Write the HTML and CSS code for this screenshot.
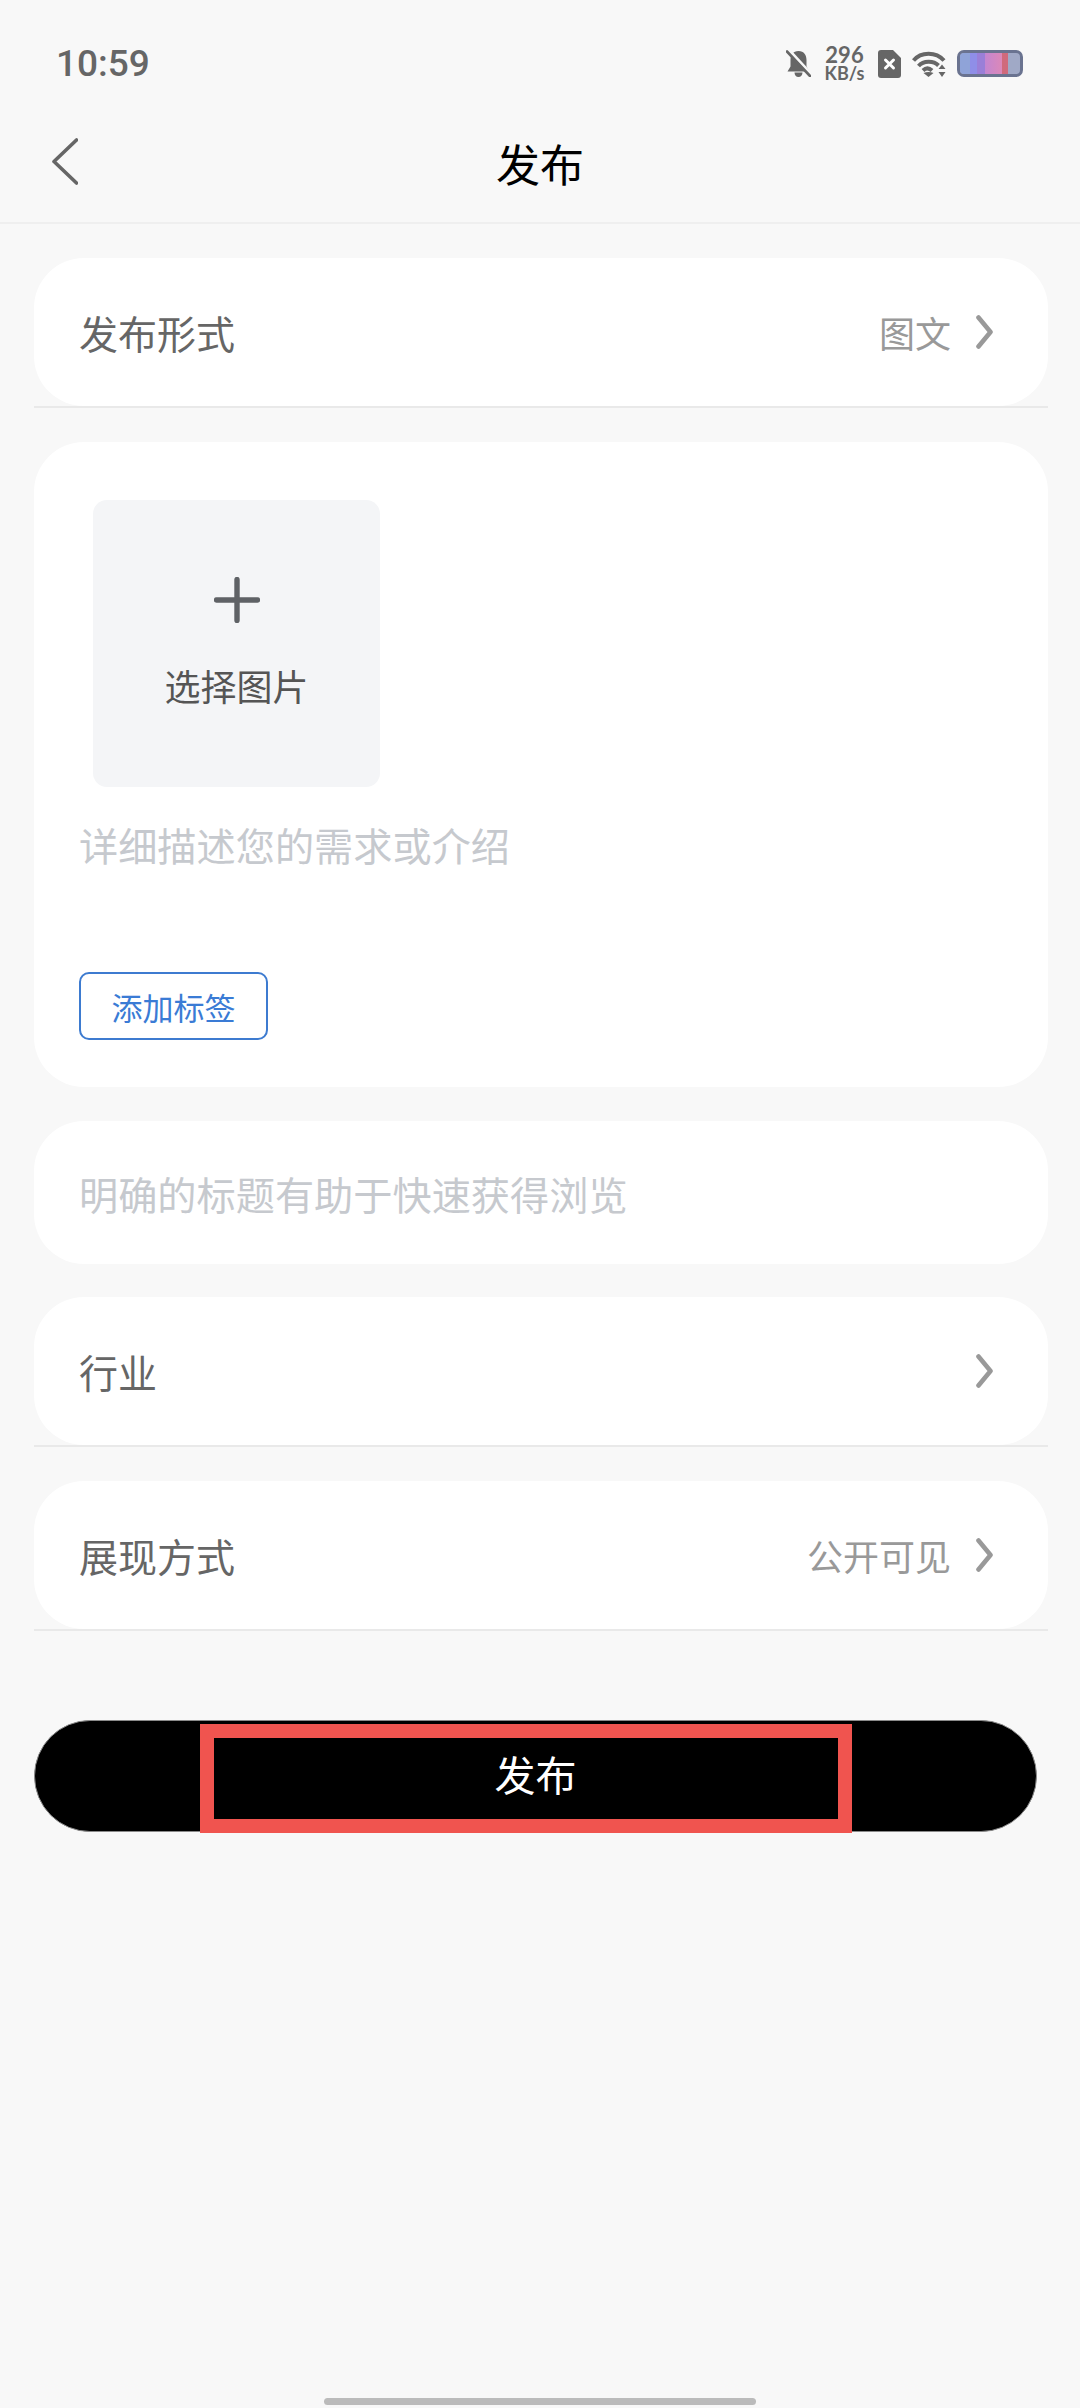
FILE: index.html
```html
<!doctype html>
<html lang="zh">
<head>
	<meta charset="utf-8">
	<title>发布</title>
	<link rel="stylesheet" href="styles.css">
</head>

<body>
<div class="status">
	<span class="time">10:59</span>
	<div class="status-icons">
		<svg class="ic-bell" width="25" height="27" viewBox="0 0 25 27">
			<path d="M12.500 1c5.500 0 8 4 8 9v6.500l3 5H1.500l3-5V10c0-5 2.500-9 8-9zM8.500 22.500h8c0 2.500-1.600 4.500-4 4.500s-4-2-4-4.500z" fill="#666"/>
			<path d="M3 0l22 24" stroke="#f8f8f8" stroke-width="3"/>
			<path d="M1 1.500l23 24.500" stroke="#666" stroke-width="2.600" stroke-linecap="round"/>
		</svg>
		<div class="speed"><span class="speed-num">296</span><span class="speed-unit">KB/s</span></div>
		<svg class="ic-sim" width="23" height="28" viewBox="0 0 23 28">
			<path d="M3 0h12l8 8v17a3 3 0 0 1-3 3H3a3 3 0 0 1-3-3V3a3 3 0 0 1 3-3z" fill="#666"/>
			<path d="M7.500 10l8 8M15.500 10l-8 8" stroke="#fff" stroke-width="3" stroke-linecap="round"/>
		</svg>
		<svg class="ic-wifi" width="34" height="26" viewBox="0 0 34 26">
			<g fill="none" stroke="#666" stroke-width="4">
				<path d="M1.500 9.500C9 .5 24 .5 32 9.500"/>
				<path d="M6.500 15c5-5.500 15-5.500 20-.5"/>
				<path d="M11 19.500c2.800-2.800 6-2.800 9 0"/>
			</g>
			<path d="M11.500 22c3-1.500 7-1.500 10 0L16.500 26z" fill="#666"/>
			<path d="M30 13.500l3.500 4.500h-7zM30 26l-3.500-5h7z" fill="#666"/>
		</svg>
		<div class="battery"><div class="battery-fill"></div></div>
	</div>
</div>

<div class="nav">
	<svg class="back" width="26" height="47" viewBox="0 0 26 47">
		<path d="M24.500 2L2 23.500 24.500 45" fill="none" stroke="#666" stroke-width="3.600" stroke-linecap="round" stroke-linejoin="round"/>
	</svg>
	<span class="nav-title">发布</span>
</div>

<div class="main">
	<div class="row-wrap">
		<div class="row">
			<span class="row-label">发布形式</span>
			<span class="row-value">图文</span>
			<svg class="chev" width="17" height="34" viewBox="0 0 17 34">
				<path d="M2.500 2.500L14.500 17 2.500 31.500" fill="none" stroke="#999" stroke-width="4.600" stroke-linecap="round" stroke-linejoin="round"/>
			</svg>
		</div>
	</div>

	<div class="card-editor">
		<div class="picker">
			<svg width="46" height="46" viewBox="0 0 46 46">
				<path d="M23 2.500v41M2.500 23h41" fill="none" stroke="#5f6266" stroke-width="5.400" stroke-linecap="round"/>
			</svg>
			<span class="picker-text">选择图片</span>
		</div>
		<div class="placeholder desc">详细描述您的需求或介绍</div>
		<div class="tag-btn">添加标签</div>
	</div>

	<div class="card-title">
		<span class="placeholder">明确的标题有助于快速获得浏览</span>
	</div>

	<div class="row-wrap">
		<div class="row">
			<span class="row-label">行业</span>
			<svg class="chev" width="17" height="34" viewBox="0 0 17 34">
				<path d="M2.500 2.500L14.500 17 2.500 31.500" fill="none" stroke="#999" stroke-width="4.600" stroke-linecap="round" stroke-linejoin="round"/>
			</svg>
		</div>
	</div>

	<div class="row-wrap">
		<div class="row">
			<span class="row-label">展现方式</span>
			<span class="row-value">公开可见</span>
			<svg class="chev" width="17" height="34" viewBox="0 0 17 34">
				<path d="M2.500 2.500L14.500 17 2.500 31.500" fill="none" stroke="#999" stroke-width="4.600" stroke-linecap="round" stroke-linejoin="round"/>
			</svg>
		</div>
	</div>

	<div class="submit">
		发布
		<div class="highlight"></div>
	</div>
</div>

<div class="home-bar"></div>
</body>
</html>
```

FILE: styles.css
```css
* {box-sizing: border-box;}

html, body {margin: 0; padding: 0;}
body {width: 1080px; height: 2408px; background: #f8f8f8; font-family: "Noto Sans CJK SC", "Noto Sans", sans-serif; color: #666; overflow: hidden; position: relative;}

/* status bar */
.status {height: 97px; padding: 30px 57px 0 56px; display: flex; align-items: center; justify-content: space-between;}
.time {font-family: Roboto, sans-serif; font-size: 37px; font-weight: 500; color: #666; line-height: 40px;}
.status-icons {display: flex; align-items: center;}
.ic-bell {margin-right: 15px;}
.speed {display: flex; flex-direction: column; align-items: center; width: 37px; margin-right: 15px; font-family: Lato, sans-serif; font-weight: 700; color: #666;}
.speed-num {font-size: 22px; line-height: 20px;}
.speed-unit {font-size: 18px; line-height: 17px;}
.ic-sim {margin-right: 11px;}
.ic-wifi {margin-right: 11px;}
.battery {width: 66px; height: 27px; border: 3px solid #6a7390; border-radius: 7px; background: #a0a9c6; overflow: hidden;}
.battery-fill {width: 48px; height: 100%; background: linear-gradient(to right, #8fa3d8 0, #8fa3d8 21%, #8f8ee8 21%, #8f8ee8 35%, #9a7fd8 35%, #9a7fd8 53%, #c486d0 53%, #dc88b8 88%, #d06a7c 88%, #d06a7c 100%);}

/* nav */
.nav {height: 127px; border-bottom: 2px solid #efefef; position: relative; display: flex; align-items: center; justify-content: center;}
.back {position: absolute; left: 52px; top: 41px;}
.nav-title {font-size: 44px; color: #000; line-height: 60px; margin-top: 6px;}

/* content */
.main {padding: 34px 32px 0 34px;}

.row-wrap {height: 150px; border-bottom: 2px solid #e9e9e9; margin-bottom: 34px;}
.row {height: 148px; background: #fff; border-radius: 50px; padding: 0 55px 0 45px; display: flex; align-items: center;}
.row-label {font-size: 39px; color: #666; flex: 1; line-height: 60px;}
.row-value {font-size: 36px; color: #999; margin-right: 25px; line-height: 60px;}

.card-editor {background: #fff; border-radius: 50px; height: 645px; padding: 58px 45px 0; margin-bottom: 34px;}
.picker {width: 287px; height: 287px; margin-left: 14px; background: #f4f5f7; border-radius: 14px; display: flex; flex-direction: column; align-items: center; padding-top: 77px;}
.picker-text {font-size: 36px; color: #555; line-height: 50px; margin-top: 37px;}
.placeholder {font-size: 39.200px; color: #c6c9ce; line-height: 60px;}
.desc {margin-top: 27px;}
.tag-btn {width: 189px; height: 68px; margin-top: 98px; border: 2px solid #3d7bd0; border-radius: 10px; color: #3a7bd5; font-size: 31px; display: flex; align-items: center; justify-content: center;}

.card-title {height: 143px; background: #fff; border-radius: 50px; padding: 0 45px; display: flex; align-items: center; margin-bottom: 33px;}

/* publish button */
.submit {width: 1003px; height: 112px; margin-top: 89px; padding-bottom: 6px; background: #000; border: 1.500px solid #8a8a8a; border-radius: 56px; color: #fff; font-size: 41px; display: flex; align-items: center; justify-content: center; position: relative;}
.highlight {position: absolute; left: 165px; top: 3px; width: 652px; height: 109px; border: 14px solid #f0544f;}

.home-bar {position: absolute; left: 324px; top: 2398px; width: 432px; height: 7px; background: #bbb; border-radius: 4px;}
```
